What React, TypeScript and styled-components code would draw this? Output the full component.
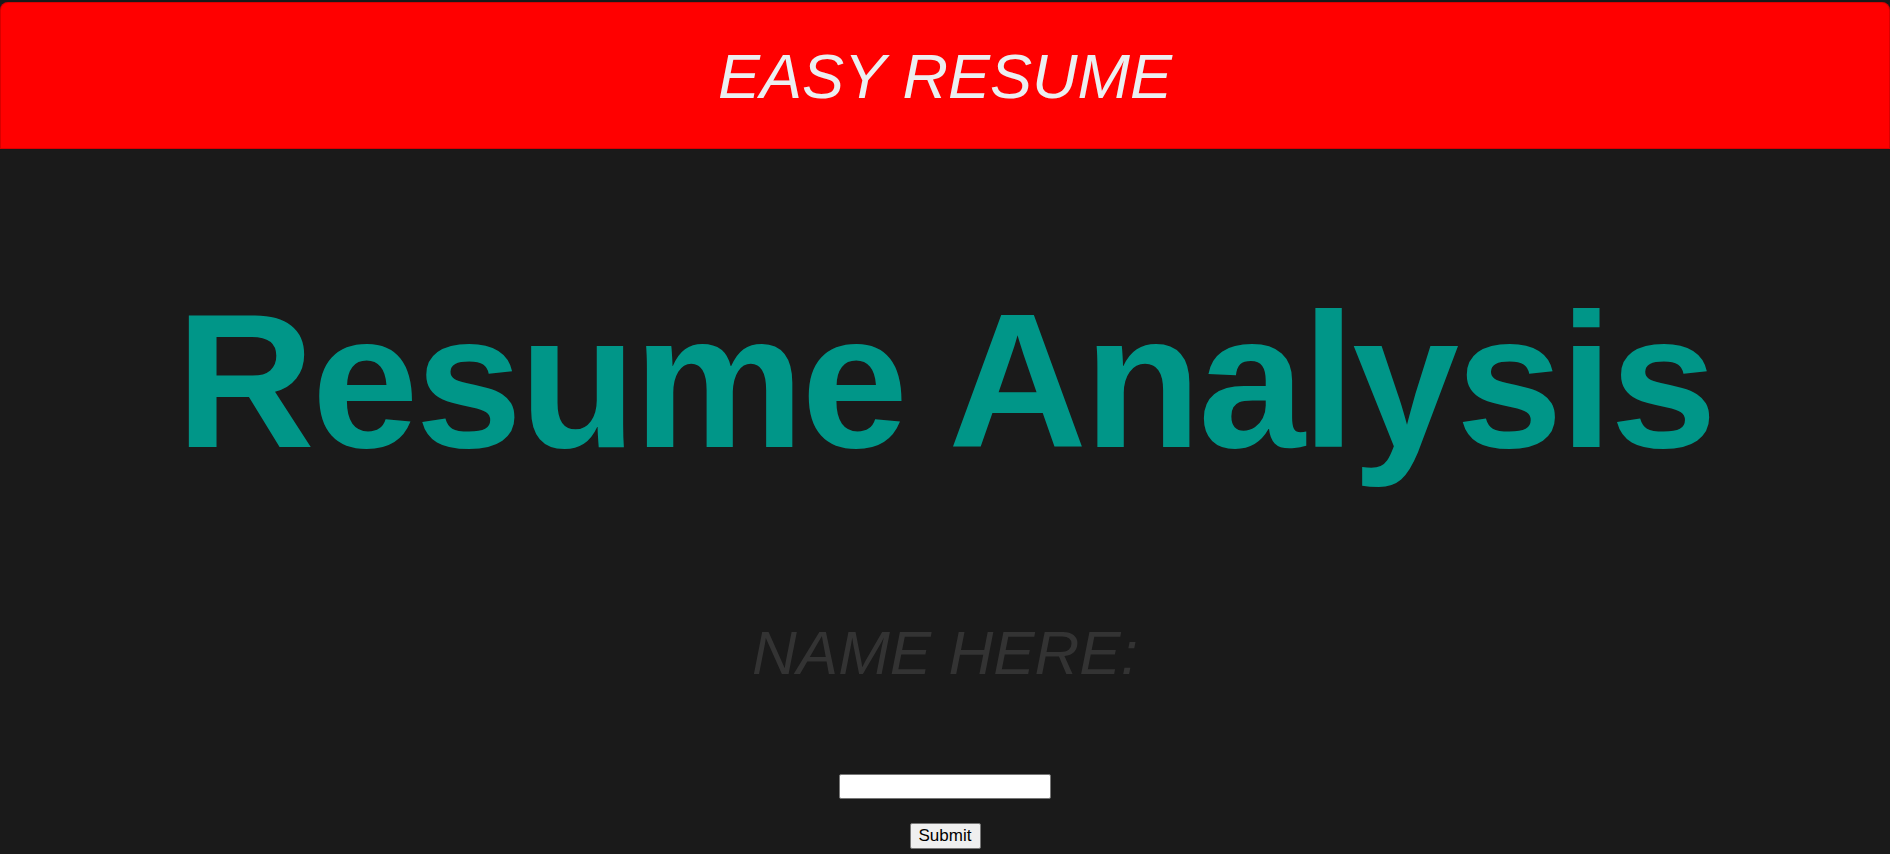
import React from "react";
import styled, { createGlobalStyle } from "styled-components";

const Global = createGlobalStyle`
  html, body {
    margin: 0;
    padding: 0;
    background: #1a1a1a;
    overflow: hidden;
  }
  body {
    font-family: "Liberation Sans", Arial, sans-serif;
  }
`;

const Page = styled.div`
  display: flex;
  flex-direction: column;
  align-items: stretch;
  min-height: 854px;
`;

const Header = styled.header`
  margin-top: 2px;
  height: 147px;
  background: #ff0000;
  border-top-left-radius: 8px;
  border-top-right-radius: 8px;
  box-shadow: inset 0 0 0 1px rgba(0, 0, 0, 0.15);
  display: flex;
  align-items: center;
  justify-content: center;
`;

const Brand = styled.h2`
  margin: 0;
  font-family: "Liberation Sans", Arial, sans-serif;
  font-style: italic;
  font-weight: 400;
  font-size: 63px;
  line-height: 64px;
  color: #eceff1;
`;

const Main = styled.main`
  display: flex;
  flex-direction: column;
  align-items: center;
`;

const Title = styled.h1`
  margin: 136px 0 0;
  font-family: "Liberation Sans", Arial, sans-serif;
  font-weight: 700;
  font-size: 192px;
  line-height: 192px;
  letter-spacing: -3px;
  color: #009688;
  white-space: nowrap;
`;

const NameLabel = styled.label`
  margin-top: 144px;
  font-family: "Liberation Sans", Arial, sans-serif;
  font-style: italic;
  font-size: 62px;
  line-height: 64px;
  color: #333333;
`;

const Form = styled.form`
  display: flex;
  flex-direction: column;
  align-items: center;
  margin-top: 89px;
  gap: 24px;
`;

const NameInput = styled.input`
  box-sizing: border-box;
  width: 212px;
  height: 25px;
  background: #ffffff;
  border: 1px solid #767676;
  border-radius: 2px;
  padding: 1px 4px;
  font-family: "Liberation Sans", Arial, sans-serif;
  font-size: 16px;
  outline: none;
`;

const SubmitButton = styled.button`
  box-sizing: border-box;
  width: 71px;
  height: 26px;
  background: #efefef;
  border: 1px solid #767676;
  border-radius: 2px;
  padding: 0;
  font-family: "Liberation Sans", Arial, sans-serif;
  font-size: 17px;
  color: #000;
  cursor: pointer;
`;

const Note = styled.p`
  margin: 3px 0 0;
  font-family: "Liberation Sans", Arial, sans-serif;
  font-size: 16px;
  color: #555555;
`;

export default function App() {
  return (
    <Page>
      <Global />
      <Header>
        <Brand>EASY RESUME</Brand>
      </Header>
      <Main>
        <Title>Resume Analysis</Title>
        <NameLabel htmlFor="name">NAME HERE:</NameLabel>
        <Form onSubmit={(e) => e.preventDefault()}>
          <NameInput id="name" type="text" />
          <SubmitButton type="submit">Submit</SubmitButton>
        </Form>
        <Note>Upload your resume below</Note>
      </Main>
    </Page>
  );
}
